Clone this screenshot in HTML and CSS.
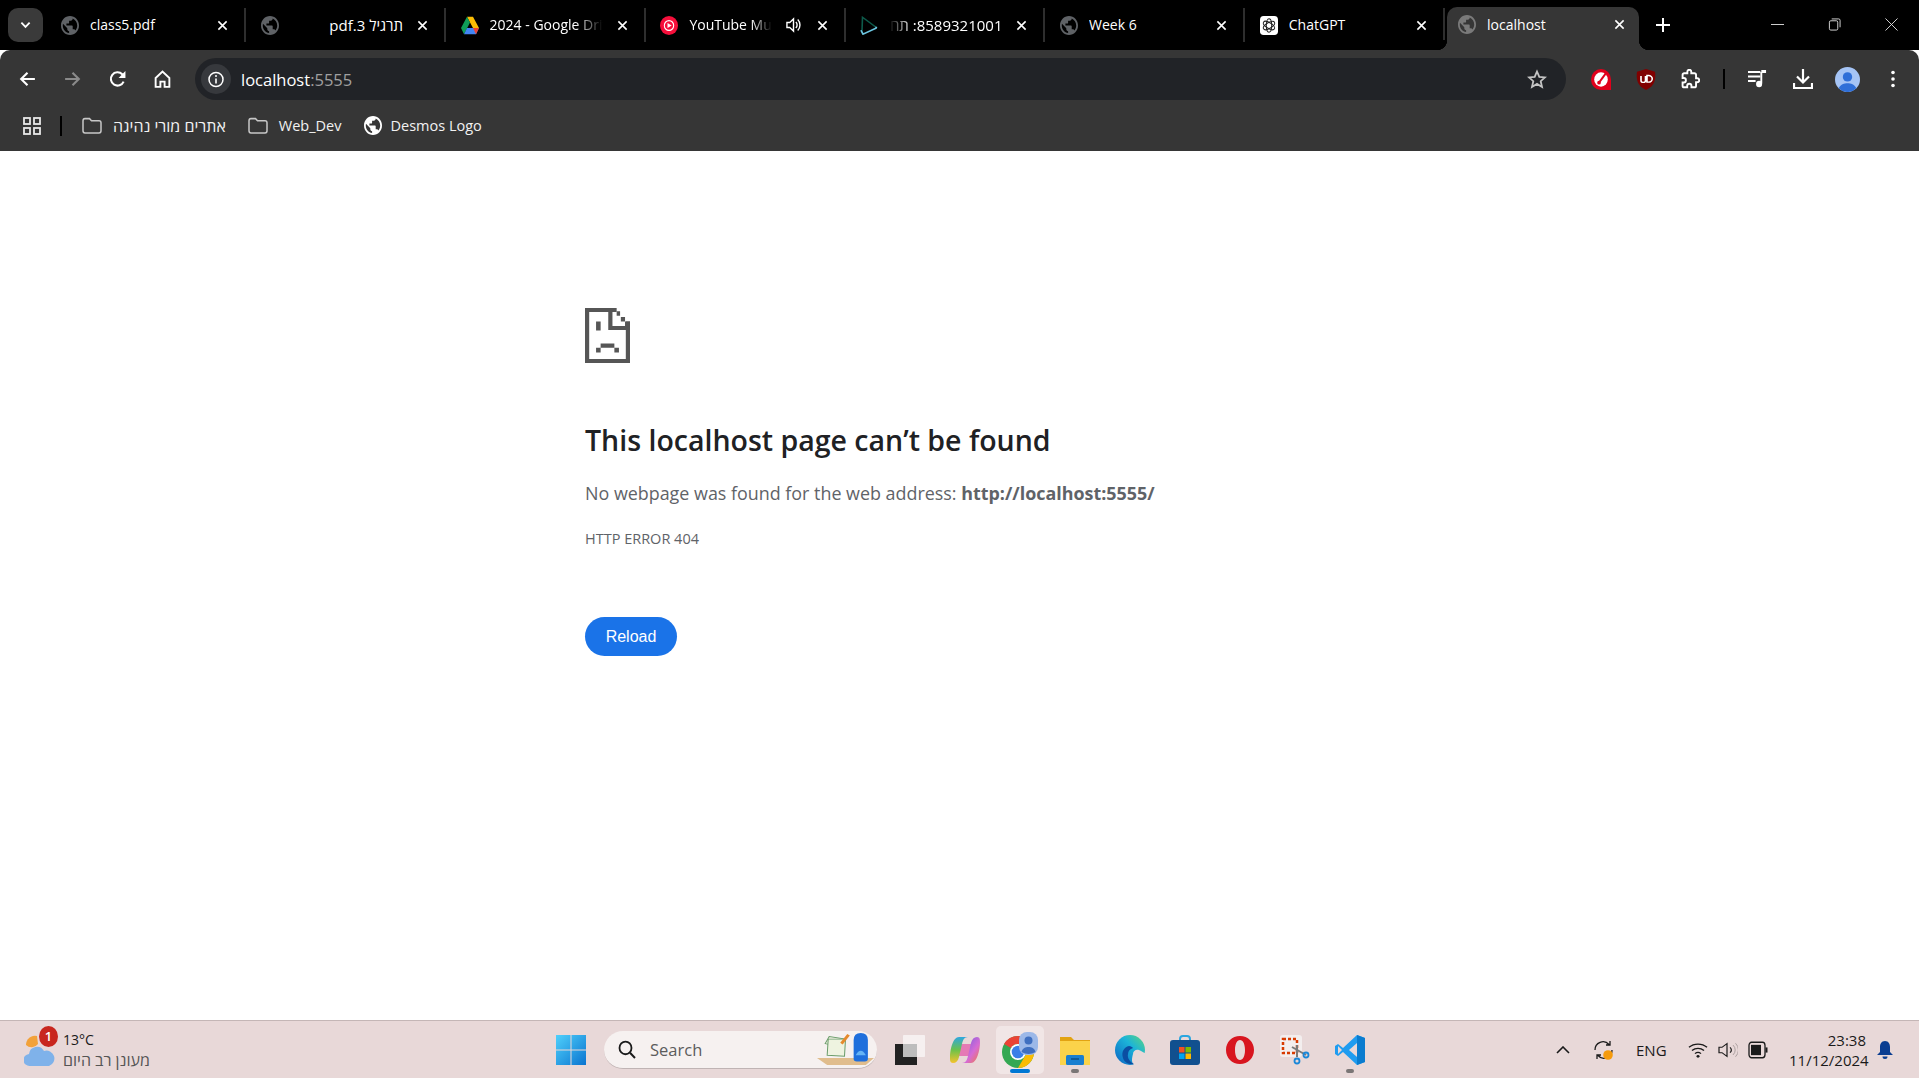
FILE: index.html
```html
<!DOCTYPE html>
<html lang="en">
<head>
<meta charset="utf-8">
<title>localhost</title>
<link rel="stylesheet" href="styles.css">
</head>
<body>
<svg class="defs" aria-hidden="true">
  <symbol id="globe" viewBox="2 2 20 20" preserveAspectRatio="none"><path fill="currentColor" d="M12 2C6.480 2 2 6.480 2 12s4.480 10 10 10 10-4.480 10-10S17.520 2 12 2zm-1 17.930c-3.950-.49-7-3.850-7-7.930 0-.62.08-1.210.21-1.790L9 15v1c0 1.100.9 2 2 2v1.930zm6.900-2.540c-.26-.81-1-1.390-1.900-1.390h-1v-3c0-.55-.45-1-1-1H8v-2h2c.55 0 1-.45 1-1V7h2c1.100 0 2-.9 2-2v-.41c2.930 1.190 5 4.060 5 7.410 0 2.080-.8 3.970-2.100 5.390z"/></symbol>
  <symbol id="close" viewBox="0 0 12 12"><path d="M1.500 1.500l9 9M10.500 1.500l-9 9" stroke="#fff" stroke-width="1.700" fill="none"/></symbol>
  <symbol id="folder" viewBox="0 0 20 16" preserveAspectRatio="none"><path d="M1 3.500c0-1.100.9-2 2-2h4.500l2 2H17c1.100 0 2 .9 2 2V13c0 1.100-.9 2-2 2H3c-1.100 0-2-.9-2-2z" fill="none" stroke="#c7c7c7" stroke-width="1.500"/></symbol>
</svg>

<div class="app">
  <header class="tabstrip">
    <button class="tab-search"><svg class="ico-chev" viewBox="0 0 12 8"><path d="M1.500 1.500L6 6l4.500-4.500" fill="none" stroke="#fff" stroke-width="2"/></svg></button>
    <div class="tab">
      <svg class="fav fav-gray"><use href="#globe"/></svg>
      <span class="tab-title">class5.pdf</span>
      <svg class="tab-close"><use href="#close"/></svg>
    </div>
    <div class="tab">
      <svg class="fav fav-gray"><use href="#globe"/></svg>
      <span class="tab-title tab-title-rtl" dir="rtl">תרגיל 3.pdf</span>
      <svg class="tab-close"><use href="#close"/></svg>
    </div>
    <div class="tab">
      <svg class="fav" viewBox="0 0 24 22" preserveAspectRatio="none"><path d="M8 1h8l8 13h-8z" fill="#fbbc04"/><path d="M8 1l4 6.500L4 21 0 14z" fill="#0f9d58"/><path d="M4 21l4-7h16l-4 7z" fill="#4285f4"/><path d="M16 14h8l-4 7z" fill="#ea4335"/></svg>
      <span class="tab-title tab-title-fade">2024 - Google Drive</span>
      <svg class="tab-close"><use href="#close"/></svg>
    </div>
    <div class="tab">
      <svg class="fav" viewBox="0 0 20 20" preserveAspectRatio="none"><circle cx="10" cy="10" r="10" fill="#f50f3b"/><circle cx="10" cy="10" r="5.200" fill="none" stroke="#fff" stroke-width="1.200"/><path d="M8.300 7.300L13 10l-4.700 2.700z" fill="#fff"/></svg>
      <span class="tab-title tab-title-fade">YouTube Music</span>
      <svg class="tab-audio" viewBox="0 0 16 16" preserveAspectRatio="none"><path d="M1 5.500h3l4-3.500v12l-4-3.500H1z" fill="none" stroke="#fff" stroke-width="1.500"/><path d="M10.500 5a4 4 0 010 6M12.500 2.500a7.500 7.500 0 010 11" fill="none" stroke="#fff" stroke-width="1.500"/></svg>
      <svg class="tab-close"><use href="#close"/></svg>
    </div>
    <div class="tab">
      <svg class="fav" viewBox="0 0 18 22" preserveAspectRatio="none"><path d="M2 17L2.500 1.500 16 13" fill="none" stroke="#0d5a4a" stroke-width="1.600"/><path d="M16.500 12.500l-.5 1.500-13 7-2-4.500" fill="none" stroke="#6cc5e0" stroke-width="1.800"/></svg>
      <span class="tab-title tab-title-rtl tab-title-fade-left" dir="rtl">8589321001: תח</span>
      <svg class="tab-close"><use href="#close"/></svg>
    </div>
    <div class="tab">
      <svg class="fav fav-gray"><use href="#globe"/></svg>
      <span class="tab-title">Week 6</span>
      <svg class="tab-close"><use href="#close"/></svg>
    </div>
    <div class="tab">
      <svg class="fav" viewBox="0 0 20 20" preserveAspectRatio="none"><rect width="20" height="20" rx="4" fill="#fff"/><g fill="none" stroke="#222" stroke-width="1.100"><ellipse cx="10" cy="10" rx="3" ry="7"/><ellipse cx="10" cy="10" rx="3" ry="7" transform="rotate(60 10 10)"/><ellipse cx="10" cy="10" rx="3" ry="7" transform="rotate(120 10 10)"/></g></svg>
      <span class="tab-title">ChatGPT</span>
      <svg class="tab-close"><use href="#close"/></svg>
    </div>
    <div class="tab tab-active">
      <svg class="fav fav-light"><use href="#globe"/></svg>
      <span class="tab-title">localhost</span>
      <svg class="tab-close"><use href="#close"/></svg>
    </div>
    <svg class="tab-new" viewBox="0 0 14 14"><path d="M7 0v14M0 7h14" stroke="#fff" stroke-width="2"/></svg>
    <div class="win-controls">
      <svg class="win-ico" viewBox="0 0 14 14"><path d="M0 7h14" stroke="#ddd" stroke-width="1"/></svg>
      <svg class="win-ico" viewBox="0 0 14 14"><rect x="1.500" y="3" width="9" height="10" rx="1.500" fill="none" stroke="#ddd"/><path d="M4 1h7.500a1.500 1.500 0 011.500 1.500V10" fill="none" stroke="#ddd"/></svg>
      <svg class="win-ico" viewBox="0 0 14 14"><path d="M.5.500l13 13M13.500.500l-13 13" stroke="#ddd"/></svg>
    </div>
  </header>

  <div class="toolbar">
    <div class="navrow">
      <span class="slot"><svg class="ico" viewBox="0 0 18 18"><path d="M16 9H3M9 3L3 9l6 6" fill="none" stroke="#fff" stroke-width="2"/></svg></span>
      <span class="slot"><svg class="ico" viewBox="0 0 18 18"><path d="M2 9h13M9 3l6 6-6 6" fill="none" stroke="#8a8a8a" stroke-width="2"/></svg></span>
      <span class="slot"><svg class="ico" viewBox="0 0 18 18"><path d="M14.800 11.500A6.300 6.300 0 1113.500 4.500L15.500 6.500" fill="none" stroke="#fff" stroke-width="2"/><path d="M16.500 1.500V8h-6.500z" fill="#fff"/></svg></span>
      <span class="slot"><svg class="ico" viewBox="0 0 18 18"><path d="M2.500 8L9 2l6.500 6v8.500H11v-5H7v5H2.500z" fill="none" stroke="#fff" stroke-width="1.800"/></svg></span>
      <div class="omnibox">
        <span class="omni-info"><svg class="ico-info" viewBox="0 0 16 16"><circle cx="8" cy="8" r="7" fill="none" stroke="#fff" stroke-width="1.500"/><path d="M8 7v5" stroke="#fff" stroke-width="1.600"/><circle cx="8" cy="4.600" r="1" fill="#fff"/></svg></span>
        <span class="omni-url">localhost<span class="omni-port">:5555</span></span>
        <svg class="ico-star" viewBox="0 0 20 20"><path d="M10 2l2.300 5.400 5.700.5-4.300 3.800 1.300 5.700L10 14.400 5 17.400l1.300-5.700L2 7.900l5.700-.5z" fill="none" stroke="#c4c4c4" stroke-width="1.800"/></svg>
      </div>
      <div class="actions">
        <span class="slot"><svg class="ico-ext" viewBox="0 0 20 20" preserveAspectRatio="none"><path d="M10 0a10 10 0 000 20h10V10A10 10 0 0010 0z" fill="#e0001b"/><circle cx="10" cy="10" r="6.800" fill="#fff"/><path d="M15 4L8 13" stroke="#e0001b" stroke-width="2"/><circle cx="8" cy="13" r="1.800" fill="#e0001b"/></svg></span>
        <span class="slot"><svg class="ico-ext" viewBox="0 0 20 24" preserveAspectRatio="none"><path d="M10 0l9 3c1 8 0 16-9 21C1 19 0 11 1 3z" fill="#800000"/><path d="M5 8v5a2.200 2.200 0 004.500 0V8M11 7.500v7.500h1.500a3.700 3.700 0 000-7.500z" fill="none" stroke="#fff" stroke-width="1.600"/></svg></span>
        <span class="slot"><svg class="ico" viewBox="0 0 24 24" preserveAspectRatio="none"><path d="M20.500 11H19V7c0-1.100-.9-2-2-2h-4V3.500C13 2.120 11.880 1 10.500 1S8 2.120 8 3.500V5H4c-1.100 0-1.990.9-1.990 2v3.800H3.500c1.490 0 2.700 1.210 2.700 2.700s-1.210 2.700-2.700 2.700H2V20c0 1.100.9 2 2 2h3.800v-1.500c0-1.490 1.210-2.700 2.700-2.700 1.490 0 2.700 1.210 2.700 2.700V22H17c1.100 0 2-.9 2-2v-4h1.500c1.380 0 2.500-1.120 2.500-2.500S21.880 11 20.500 11z" fill="none" stroke="#fff" stroke-width="2.400"/></svg></span>
        <span class="tool-sep"></span>
        <span class="slot"><svg class="ico" viewBox="0 0 20 20" preserveAspectRatio="none"><path d="M0 3h13M0 7.500h13M0 12h8" stroke="#fff" stroke-width="2"/><path d="M14 3v11.500" stroke="#fff" stroke-width="2"/><path d="M14 2.500h5" stroke="#fff" stroke-width="3"/><circle cx="11.700" cy="15" r="3.200" fill="#fff"/></svg></span>
        <span class="slot"><svg class="ico-dl" viewBox="0 0 20 22" preserveAspectRatio="none"><path d="M10 1v13M4 8.500l6 6 6-6" fill="none" stroke="#fff" stroke-width="2.200"/><path d="M1 15v5h18v-5" fill="none" stroke="#fff" stroke-width="2.200"/></svg></span>
        <span class="slot"><svg class="ico-avatar" viewBox="0 0 24 24" preserveAspectRatio="none"><circle cx="12" cy="12" r="12" fill="#a5c4f5"/><circle cx="12" cy="9.500" r="4.500" fill="#2f6fd8"/><path d="M3.500 20.500C5 16.500 9 15.500 12 15.500s7 1 8.500 5a12 12 0 01-17 0z" fill="#2f6fd8"/></svg></span>
        <span class="slot"><svg class="ico-dots" viewBox="0 0 4 18"><circle cx="2" cy="2.500" r="1.800" fill="#fff"/><circle cx="2" cy="9" r="1.800" fill="#fff"/><circle cx="2" cy="15.500" r="1.800" fill="#fff"/></svg></span>
      </div>
    </div>
    <nav class="bookmarks">
      <svg class="ico-apps" viewBox="0 0 18 18" preserveAspectRatio="none"><g fill="none" stroke="#e8e8e8" stroke-width="1.800"><rect x="1" y="1" width="6" height="6"/><rect x="11" y="1" width="6" height="6"/><rect x="1" y="11" width="6" height="6"/><rect x="11" y="11" width="6" height="6"/></g></svg>
      <span class="bm-sep"></span>
      <span class="bm"><svg class="bm-ico"><use href="#folder"/></svg><span class="bm-label bm-label-he" dir="rtl">אתרים מורי נהיגה</span></span>
      <span class="bm"><svg class="bm-ico"><use href="#folder"/></svg><span class="bm-label">Web_Dev</span></span>
      <span class="bm"><svg class="bm-ico bm-globe"><use href="#globe"/></svg><span class="bm-label">Desmos Logo</span></span>
    </nav>
  </div>

  <main class="page">
    <svg class="sad" viewBox="0 0 118 163" preserveAspectRatio="none"><path fill="#565656" d="M0 0h83v12H11v139h96V40h11v123H0z"/><path fill="#565656" d="M61 10h11v43h46v12H61zM83 10h9v13h-9zM94 27h11v13H94zM105 40h13v13h-13z"/><path fill="#565656" d="M29 40h12v27H29zM29 118h12v14H29zM41 105h36v13H41zM77 118h12v14H77z"/></svg>
    <h1 class="title">This localhost page can’t be found</h1>
    <p class="desc">No webpage was found for the web address: <strong>http://localhost:5555/</strong></p>
    <p class="code">HTTP ERROR 404</p>
    <button class="reload">Reload</button>
  </main>

  <footer class="taskbar">
    <div class="weather">
      <span class="weather-icon">
        <svg class="weather-svg" viewBox="0 0 31 36" preserveAspectRatio="none"><path d="M13 4a9 9 0 00-11 9 8 8 0 0012-1z" fill="#f2a23a"/><path d="M6 34a6 6 0 01-1-12 8 8 0 0115-3 7.500 7.500 0 015 15z" fill="#7fb2ea"/></svg>
        <span class="weather-badge">1</span>
      </span>
      <span class="weather-text"><span class="weather-temp">13°C</span><span class="weather-desc" dir="rtl">מעונן רב היום</span></span>
    </div>
    <span class="task-slot"><svg class="task-ico" viewBox="0 0 30 30" preserveAspectRatio="none"><defs><linearGradient id="win" x1="0" y1="0" x2="1" y2="1"><stop offset="0" stop-color="#4fd0fb"/><stop offset="1" stop-color="#0a74d0"/></linearGradient></defs><path fill="url(#win)" d="M0 0h14.500v14.500H0zM15.500 0H30v14.500H15.500zM0 15.500h14.500V30H0zM15.500 15.500H30V30H15.500z"/></svg></span>
    <div class="searchbox">
      <svg class="search-ico" viewBox="0 0 18 18" preserveAspectRatio="none"><circle cx="7.500" cy="7.500" r="6" fill="none" stroke="#1a1a1a" stroke-width="1.800"/><path d="M12 12l5 5" stroke="#1a1a1a" stroke-width="2"/></svg>
      <span class="search-label">Search</span>
      <svg class="search-art" viewBox="0 0 56 38" preserveAspectRatio="none"><path d="M0 29h56l-8 8H10z" fill="#e0bd8d"/><path d="M8 13l16 4 4-9-16-3z" fill="#f4f2e6" stroke="#6a9c6a"/><path d="M10 26l17 1 1-19-17 0z" fill="#eef3e0" stroke="#6a9c6a"/><path d="M24 13l7-10" stroke="#e58a2c" stroke-width="3"/><path d="M36 30V9q0-8 7-8t7 8v21q0 3-3 3h-8q-3 0-3-3z" fill="#1f6fdc"/><path d="M38 26q5-10 10 0z" fill="#66b4f5"/></svg>
    </div>
    <span class="task-slot"><svg class="task-ico" viewBox="0 0 30 30"><rect x="0" y="9" width="22" height="21" fill="#222"/><rect x="8" y="0" width="22" height="22" rx="1" fill="#f8f5f5" opacity=".85"/><rect x="8" y="9" width="14" height="13" fill="#bdbdbd"/></svg></span>
    <span class="task-slot"><svg class="task-ico" viewBox="0 0 30 30" preserveAspectRatio="none"><defs><linearGradient id="cop1" x1="0" y1="0" x2="0" y2="1"><stop offset="0" stop-color="#2fa7e0"/><stop offset=".5" stop-color="#6cc24a"/><stop offset="1" stop-color="#f5c32c"/></linearGradient><linearGradient id="cop2" x1="0" y1="0" x2="1" y2="1"><stop offset="0" stop-color="#6a5be2"/><stop offset=".6" stop-color="#d66bd4"/><stop offset="1" stop-color="#f07a3e"/></linearGradient></defs><path d="M10 9h13l-3 12H7z" fill="#e57ab5"/><path d="M9 2h9c-4 0-5 3-6 7l-3 13c-1 4-3 6-6 6-3 0-3-3-3-5C0 14 3 2 9 2z" fill="url(#cop1)"/><path d="M21 28h-9c4 0 5-3 6-7l3-13c1-4 3-6 6-6 3 0 3 3 3 5 0 8-3 21-9 21z" fill="url(#cop2)"/></svg></span>
    <span class="task-slot task-slot-active">
      <svg class="task-ico task-ico-chrome" viewBox="0 0 36 36" preserveAspectRatio="none"><circle cx="16" cy="20" r="16" fill="#34a853"/><path d="M16 4a16 16 0 0113.900 8H16a8 8 0 00-7 4L2.100 12A16 16 0 0116 4z" fill="#ea4335"/><path d="M29.900 12A16 16 0 0116 36l7-12a8 8 0 000-12z" fill="#fbbc04"/><circle cx="16" cy="20" r="8" fill="#fff"/><circle cx="16" cy="20" r="6.300" fill="#3a7fe8"/><rect x="17" y="0" width="19" height="23" rx="8" fill="#9cb8e8"/><circle cx="26.500" cy="8.500" r="4" fill="#3f6fc0"/><path d="M19.500 20c1-4 4-5 7-5s6 1 7 5q-7 4-14 0z" fill="#3f6fc0"/></svg>
      <span class="task-bar"></span>
    </span>
    <span class="task-slot">
      <svg class="task-ico" viewBox="0 0 30 30" preserveAspectRatio="none"><path d="M0 2h11l3 3h16v4H0z" fill="#e2a312"/><path d="M0 6h30v24H0z" fill="#fbd34a"/><rect x="6" y="20" width="18" height="10" rx="1.500" fill="#1a7fd0"/><path d="M11 24h8" stroke="#0b4f8a" stroke-width="1.500"/></svg>
      <span class="task-dot"></span>
    </span>
    <span class="task-slot"><svg class="task-ico" viewBox="0 0 30 30" preserveAspectRatio="none"><defs><linearGradient id="edge" x1="0" y1="1" x2="1" y2="0"><stop offset="0" stop-color="#0b62c4"/><stop offset=".6" stop-color="#1cb4d8"/><stop offset="1" stop-color="#5ed67a"/></linearGradient></defs><circle cx="15" cy="15" r="15" fill="url(#edge)"/><path d="M18 19c0-3 3-5 6-4 3 1 5 3 6 3v12H19c-3-3-2-7-1-11z" fill="#e8d8d8"/><path d="M14 11c-5 1-8 6-6 12 1 4 6 7 11 6-4-2-7-6-6-10 0-3 2-5 5-6-1-1-2-2-4-2z" fill="#0b4ea2"/></svg></span>
    <span class="task-slot"><svg class="task-ico" viewBox="0 0 30 30" preserveAspectRatio="none"><path d="M10 6V4a3 3 0 013-3h4a3 3 0 013 3v2" fill="none" stroke="#2aa6e0" stroke-width="2"/><rect y="5" width="30" height="25" rx="3" fill="#11508f"/><rect x="9" y="12" width="5.500" height="5.500" fill="#f25022"/><rect x="15.500" y="12" width="5.500" height="5.500" fill="#7fba00"/><rect x="9" y="18.500" width="5.500" height="5.500" fill="#00a4ef"/><rect x="15.500" y="18.500" width="5.500" height="5.500" fill="#ffb900"/></svg></span>
    <span class="task-slot"><svg class="task-ico" viewBox="0 0 30 30" preserveAspectRatio="none"><path fill="#d8151f" fill-rule="evenodd" d="M15 1c8 0 14 6 14 14s-6 14-14 14S1 23 1 15 7 1 15 1zm0 4c-3 0-5 4-5 10s2 10 5 10 5-4 5-10-2-10-5-10z"/></svg></span>
    <span class="task-slot"><svg class="task-ico" viewBox="0 0 30 30" preserveAspectRatio="none"><rect width="22" height="22" rx="3" fill="#f3eeee"/><rect x="3" y="4" width="14" height="14" fill="none" stroke="#d83b01" stroke-width="2.500" stroke-dasharray="3 2"/><path d="M12 12l14 8M17 10v12" stroke="#7a7a7a" stroke-width="2"/><circle cx="26" cy="20" r="2.500" fill="none" stroke="#1a87d8" stroke-width="1.800"/><circle cx="17" cy="26" r="2.500" fill="none" stroke="#1a87d8" stroke-width="1.800"/></svg></span>
    <span class="task-slot">
      <svg class="task-ico" viewBox="0 0 30 30" preserveAspectRatio="none"><path d="M22 0l8 3v24l-8 3L8 17l-5 4-3-2v-8l3-2 5 4z" fill="#1f9cf0"/><path d="M22 0l8 3v24l-8 3z" fill="#0a7ccf"/><path d="M22 8l-8 7 8 7z" fill="#e8d8d8"/><path d="M3 11v8l4-4z" fill="#e8d8d8"/></svg>
      <span class="task-dot"></span>
    </span>
    <div class="tray">
      <svg class="tray-caret" viewBox="0 0 14 8"><path d="M1 7l6-6 6 6" fill="none" stroke="#1a1a1a" stroke-width="1.600"/></svg>
      <svg class="tray-sync" viewBox="0 0 21 22" preserveAspectRatio="none"><path d="M2 11a8 8 0 0114-5.500M17 2v4h-4M19 11a8 8 0 01-14 5.500M4 20v-4h4" fill="none" stroke="#1a1a1a" stroke-width="1.300"/><circle cx="15" cy="16" r="4.800" fill="#f59b0c"/></svg>
      <span class="tray-lang">ENG</span>
      <svg class="tray-ico" viewBox="0 0 20 20" preserveAspectRatio="none"><path d="M1 7a13 13 0 0118 0M4 10.500a9 9 0 0112 0M7 14a4.500 4.500 0 016 0" fill="none" stroke="#1a1a1a" stroke-width="1.400"/><circle cx="10" cy="17" r="1.500" fill="#1a1a1a"/></svg>
      <svg class="tray-ico" viewBox="0 0 20 20" preserveAspectRatio="none"><path d="M1 7h3l5-4v14l-5-4H1z" fill="none" stroke="#1a1a1a" stroke-width="1.200"/><path d="M12 7a4 4 0 010 6" fill="none" stroke="#1a1a1a" stroke-width="1.200"/><path d="M15 4.500a8 8 0 010 11M17.500 2.500a11 11 0 010 15" fill="none" stroke="#a89c9c" stroke-width="1"/></svg>
      <svg class="tray-ico" viewBox="0 0 20 14" preserveAspectRatio="none"><rect x="1" y="1" width="16" height="12" rx="2.500" fill="none" stroke="#1a1a1a" stroke-width="1.300"/><rect x="3" y="3" width="10" height="8" fill="#1a1a1a"/><path d="M18.500 5v4" stroke="#1a1a1a" stroke-width="2"/></svg>
      <span class="clock"><span>23:38</span><span>11/12/2024</span></span>
      <svg class="tray-bell" viewBox="0 0 16 20" preserveAspectRatio="none"><path d="M8 1c3.500 0 5 3 5 6v5l3 3H0l3-3V7c0-3 1.500-6 5-6z" fill="#0a3d91"/><path d="M5.500 16.500h5a2.500 2.500 0 01-5 0z" fill="#0a3d91"/></svg>
    </div>
  </footer>
</div>
</body>
</html>
```

FILE: styles.css
```css
* { box-sizing: border-box; }
html, body { margin: 0; height: 100%; overflow: hidden; }
body { font-family: "Open Sans", "Liberation Sans", sans-serif; background: #fff; }
.defs { width: 0; height: 0; display: block; overflow: hidden; }
.app { height: 1078px; display: flex; flex-direction: column; }

/* tab strip */
.tabstrip { height: 50px; background: #000; display: flex; align-items: flex-start; padding: 8px 0 0 8px; flex: none; position: relative; z-index: 1; }
.tab-search { width: 35px; height: 34px; border: 0; border-radius: 10px; background: #3a3a3a; display: flex; align-items: center; justify-content: center; padding: 0; margin-right: 3.500px; flex: none; }
.ico-chev { width: 11px; height: 8px; }
.tab { width: 199.800px; height: 34px; padding: 0 13px 0 14.500px; display: flex; align-items: center; color: #fff; font-size: 14px; border-right: 2px solid #2e2e2e; background-clip: padding-box; flex: none; position: relative; }
.fav { width: 18px; height: 19px; flex: none; }
.fav-gray { color: #5f6266; }
.fav-light { color: #7a7a7a; }
.tab-title { flex: 1; min-width: 0; margin: 0 8px 0 11px; white-space: nowrap; overflow: hidden; line-height: 20px; }
.tab-title-rtl { text-align: right; margin-right: 14px; font-size: 15px; }
.tab-title-fade { margin-right: 14px; -webkit-mask-image: linear-gradient(to right, #000 75%, transparent); mask-image: linear-gradient(to right, #000 75%, transparent); }
.tab-title-fade-left { -webkit-mask-image: linear-gradient(to left, #000 80%, transparent); mask-image: linear-gradient(to left, #000 80%, transparent); }
.tab-audio { width: 15px; height: 16px; margin-right: 16px; flex: none; }
.tab-close { width: 11px; height: 11px; flex: none; margin-right: 3px; }
.tab-active { width: 192px; height: 43px; margin: -1px 8px 0 2px; padding: 0 11px 8px 11px; background: #363636; border-radius: 10px 10px 0 0; border: 0; }
.tab-active::before, .tab-active::after { content: ""; position: absolute; bottom: 0; width: 10px; height: 10px; }
.tab-active::before { left: -10px; background: radial-gradient(circle at 0 0, #000 10px, #363636 10.500px); }
.tab-active::after { right: -10px; background: radial-gradient(circle at 100% 0, #000 10px, #363636 10.500px); }
.tab-new { width: 14px; height: 14px; margin: 10px 0 0 9px; flex: none; }
.win-controls { margin-left: auto; display: flex; gap: 44px; padding: 10px 21px 0 0; }
.win-ico { width: 13px; height: 13px; flex: none; }

/* toolbar */
.toolbar { height: 101px; flex: none; background: #363636; border-radius: 10px 10px 0 0; padding-top: 8px; }
.navrow { height: 42px; display: flex; align-items: center; padding: 0 4px 0 5px; }
.slot { width: 45px; height: 42px; display: flex; align-items: center; justify-content: center; flex: none; }
.ico { width: 19px; height: 20px; }
.omnibox { flex: 1; height: 42px; margin: 0 12px 0 10px; background: #212327; border-radius: 21px; display: flex; align-items: center; padding: 0 19px 0 6px; }
.omni-info { width: 30px; height: 30px; border-radius: 50%; background: #37393d; display: flex; align-items: center; justify-content: center; flex: none; }
.ico-info { width: 16px; height: 17px; }
.omni-url { margin-left: 10px; color: #fff; font-size: 16.500px; flex: 1; }
.omni-port { color: #a0a0a0; }
.ico-star { width: 20px; height: 21px; flex: none; }
.actions { display: flex; align-items: center; flex: none; }
.ico-ext { width: 20px; height: 21px; }
.tool-sep { width: 2px; height: 20px; background: #000; margin: 0 10px; flex: none; }
.ico-dl { width: 20px; height: 22px; }
.ico-avatar { width: 25px; height: 25px; }
.ico-dots { width: 4px; height: 18px; }
.bookmarks { height: 51px; display: flex; align-items: center; padding-left: 23px; color: #f2f2f2; font-size: 14.500px; }
.ico-apps { width: 18px; height: 18px; flex: none; }
.bm-sep { width: 2px; height: 20px; background: #000; margin: 0 20px 0 19px; flex: none; }
.bm { display: flex; align-items: center; margin-right: 22px; flex: none; }
.bm:first-of-type { margin-right: 24px; }
.bm-ico { width: 20px; height: 17px; flex: none; }
.bm-globe { width: 18px; height: 19px; color: #fff; margin-right: -2px; }
.bm-label { margin-left: 11px; white-space: nowrap; }
.bm-label-he { font-size: 16px; }

/* page */
.page { flex: 1; background: #fff; padding: 157px 0 0 585px; display: flex; flex-direction: column; align-items: flex-start; }
.sad { width: 45px; height: 55px; flex: none; }
.title { margin: 57px 0 0; font-size: 28.500px; line-height: 40px; font-weight: 600; color: #202124; }
.desc { margin: 20px 0 0; font-size: 17.900px; line-height: 26px; color: #5f6368; }
.desc strong { font-weight: 700; color: #5f6368; }
.code { margin: 23px 0 0; font-size: 14.500px; line-height: 20px; color: #5f6368; }
.reload { margin-top: 68px; width: 92px; height: 39px; border: 0; border-radius: 20px; background: #1a73e8; color: #fff; font-family: "Liberation Sans", sans-serif; font-size: 16px; padding: 0; }

/* taskbar */
.taskbar { height: 58px; flex: none; background: #e8d8d8; border-top: 1px solid #c4b6b6; display: flex; align-items: center; }
.weather { width: 543px; display: flex; align-items: center; padding-left: 24px; flex: none; }
.weather-icon { width: 31px; height: 36px; position: relative; flex: none; }
.weather-svg { width: 31px; height: 36px; display: block; }
.weather-badge { position: absolute; right: -3px; top: -6px; width: 19px; height: 21px; border-radius: 50%; background: #c8261e; color: #fff; font-size: 13px; font-weight: 600; text-align: center; line-height: 21px; }
.weather-text { margin-left: 8px; display: flex; flex-direction: column; font-size: 14px; line-height: 20px; }
.weather-temp { color: #1a1a1a; }
.weather-desc { color: #555; font-size: 16px; }
.task-slot { width: 55px; height: 48px; display: flex; align-items: center; justify-content: center; flex: none; position: relative; }
.task-slot-active { background: #f1e6e6; border-radius: 5px; width: 48px; margin: 0 3.500px; }
.task-ico { width: 30px; height: 30px; }
.task-ico-chrome { width: 36px; height: 36px; }
.task-bar { position: absolute; bottom: 1px; left: 14px; width: 20px; height: 4px; border-radius: 2px; background: #0078d4; }
.task-dot { position: absolute; bottom: 1px; left: 24px; width: 8px; height: 4px; border-radius: 2px; background: #7a7676; }
.searchbox { width: 273px; height: 38px; margin: 0 5px 0 6px; border-radius: 19px; background: #f6f1f0; border-bottom: 1px solid #c0b4b4; display: flex; align-items: center; padding: 0 3px 0 14px; flex: none; }
.search-ico { width: 18px; height: 19px; flex: none; }
.search-label { margin-left: 14px; font-size: 16.500px; color: #5c5c5c; flex: 1; }
.search-art { width: 57px; height: 34px; flex: none; }
.tray { margin-left: auto; padding-right: 26px; display: flex; align-items: center; flex: none; }
.tray-caret { width: 14px; height: 8px; }
.tray-sync { width: 21px; height: 22px; margin-left: 23px; }
.tray-lang { margin-left: 22px; font-size: 15px; color: #1a1a1a; width: 29px; }
.tray-ico { width: 20px; height: 18px; margin-right: 10px; }
.tray-lang + .tray-ico { margin-left: 23px; }
.tray-ico + .clock { margin-left: 11px; }
.clock { width: 77px; text-align: right; display: flex; flex-direction: column; font-size: 15px; line-height: 20px; color: #1a1a1a; white-space: nowrap; }
.tray-bell { width: 16px; height: 20px; margin-left: 11px; }
```
